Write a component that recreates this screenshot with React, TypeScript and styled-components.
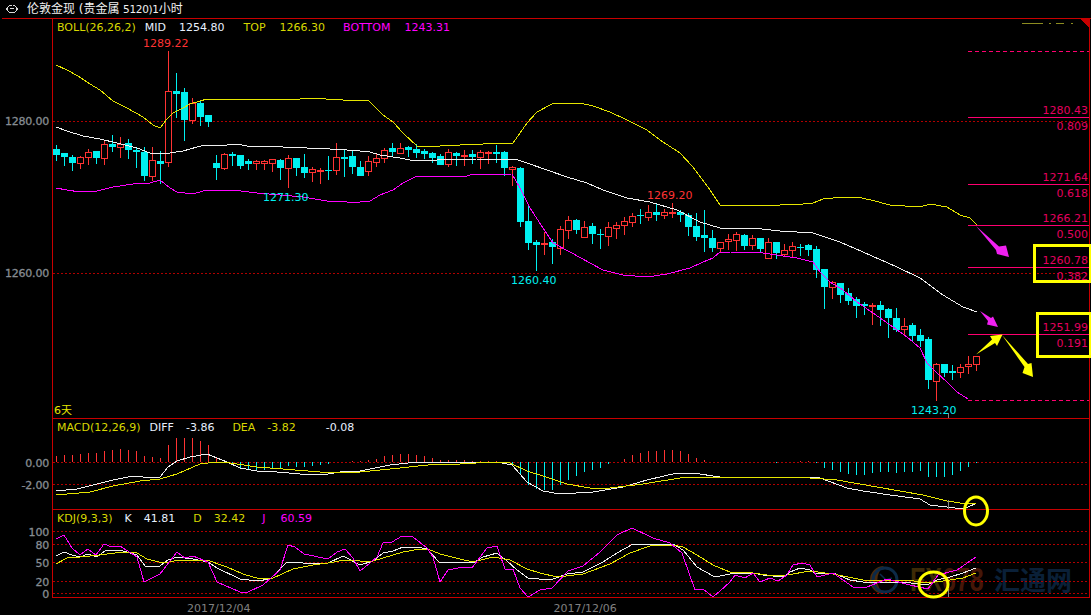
import styled, { createGlobalStyle } from 'styled-components';

const RED = '#ff3333';
const CYAN = '#00f0f0';
const YELLOW = '#e6e600';
const MAGENTA = '#ff00ff';
const FIB = '#ff0070';
const FIB_TEXT = '#e4005f';
const LINE = '#c80000';
const GRID = '#b00000';

type Candle = [wickTop: number, wickBottom: number, bodyTop: number, bodyBottom: number, up: 0 | 1];

// y pixels of every bar, one row per ten bars
const candles: Candle[] = [
  [145, 161, 149, 155, 0], [153, 166, 153, 157, 0], [155, 171, 157, 163, 0], [156, 169, 157, 163, 1], [149, 165, 152, 157, 1],
  [151, 164, 151, 158, 0], [141, 165, 144, 158, 1], [135, 152, 144, 147, 0], [137, 158, 144, 147, 1], [139, 159, 143, 150, 0],
  [147, 168, 150, 152, 0], [147, 181, 152, 176, 0], [147, 181, 160, 176, 1], [151, 184, 161, 164, 0], [51, 167, 91, 162, 1],
  [73, 118, 91, 94, 0], [88, 141, 92, 120, 0], [98, 124, 103, 120, 1], [100, 126, 103, 117, 0], [115, 127, 115, 122, 0],
  [155, 180, 163, 168, 0], [153, 170, 154, 168, 1], [152, 166, 154, 156, 0], [155, 169, 155, 166, 0], [159, 170, 161, 164, 0],
  [160, 170, 161, 163, 1], [160, 170, 161, 163, 1], [159, 172, 159, 163, 1], [159, 180, 160, 168, 0], [155, 188, 158, 168, 1],
  [158, 176, 158, 168, 0], [154, 178, 167, 173, 0], [167, 182, 169, 172, 1], [168, 184, 170, 171, 1], [156, 180, 170, 171, 0],
  [143, 175, 157, 170, 1], [150, 177, 157, 159, 0], [151, 174, 156, 167, 0], [161, 176, 167, 176, 0], [156, 176, 161, 171, 1],
  [154, 167, 158, 162, 1], [148, 163, 150, 158, 1], [143, 156, 148, 152, 0], [143, 154, 148, 153, 1], [146, 157, 147, 150, 0],
  [144, 158, 149, 153, 0], [149, 159, 151, 154, 0], [152, 163, 153, 158, 0], [154, 165, 156, 165, 0], [149, 167, 152, 164, 1],
  [152, 166, 153, 156, 0], [150, 166, 155, 156, 1], [150, 164, 154, 157, 0], [150, 169, 152, 157, 1], [151, 164, 152, 153, 1],
  [145, 163, 152, 154, 0], [151, 176, 152, 168, 0], [166, 186, 167, 169, 1], [167, 227, 168, 222, 0], [205, 250, 221, 243, 0],
  [240, 271, 242, 245, 0], [232, 255, 243, 244, 1], [239, 264, 242, 247, 0], [226, 255, 229, 248, 1], [216, 239, 220, 230, 1],
  [219, 234, 220, 230, 0], [221, 237, 227, 237, 1], [223, 244, 226, 234, 0], [229, 249, 234, 235, 0], [222, 246, 227, 236, 1],
  [222, 239, 225, 228, 1], [217, 235, 221, 225, 1], [213, 227, 216, 222, 1], [209, 224, 215, 216, 0], [205, 221, 212, 217, 1],
  [204, 221, 212, 215, 0], [209, 219, 212, 215, 1], [203, 218, 212, 213, 1], [210, 222, 212, 215, 0], [213, 236, 215, 227, 0],
  [213, 241, 226, 237, 0], [210, 252, 235, 238, 0], [230, 252, 238, 248, 0], [242, 252, 242, 248, 1], [234, 250, 239, 241, 1],
  [232, 251, 234, 240, 1], [234, 250, 235, 246, 0], [235, 250, 238, 245, 1], [238, 252, 238, 249, 0], [238, 258, 242, 258, 1],
  [242, 259, 242, 253, 0], [244, 257, 250, 254, 1], [242, 258, 246, 250, 1], [244, 256, 247, 248, 0], [244, 256, 245, 250, 0],
  [246, 278, 249, 270, 0], [269, 309, 269, 287, 0], [281, 299, 282, 287, 1], [283, 303, 283, 295, 0], [288, 305, 293, 301, 0],
  [297, 318, 299, 306, 0], [302, 315, 304, 306, 0], [303, 325, 305, 306, 1], [301, 326, 305, 310, 0], [308, 338, 309, 318, 0],
  [308, 332, 318, 330, 0], [318, 335, 326, 329, 1], [323, 341, 325, 336, 0], [329, 347, 335, 341, 0], [337, 389, 339, 380, 0],
  [363, 401, 364, 381, 1], [364, 377, 364, 373, 0], [365, 380, 371, 373, 0], [364, 378, 367, 372, 1], [356, 374, 364, 366, 1],
  [356, 371, 356, 364, 1],
];

// bar heights in pixels, above the zero line is red and below is cyan
const macdBars = [
  6.3, 7.3, 6.7, 7.7, 9.3, 9.3, 11.3, 12.3, 13, 12.3,
  11.3, 6.3, 5.3, 4.3, 17.3, 24, 24, 24, 21.3, 17.3,
  5, 0.5, -3, -6, -7, -8.3, -7.7, -6, -6.7, -4.3,
  -5, -4.7, -4.3, -3.3, -2, 0.5, 0.5, 1.3, 0.7, 2.3,
  3.3, 6.3, 7.3, 8.3, 8.3, 7.3, 6.3, 4.3, 2.3, 2.3,
  2.3, 2.3, 1.3, 1.3, 1.3, 1.3, 0, -1.7, -12.7, -22.7,
  -27.3, -28.3, -28.3, -23.3, -17.7, -13.7, -9.7, -7.7, -5.7, -1.7,
  0, 3, 7.3, 9.3, 11.3, 11.3, 12.3, 12.3, 11.3, 8.3,
  4.3, 2.3, 0, 0, 0, 0, 0, 0.5, 0, 0.5,
  -0.5, 0, 0.5, 1, 1, -0.7, -5.7, -7.7, -9.7, -11.7,
  -12.7, -12.7, -10.7, -9.7, -9.7, -10.7, -9.7, -9.7, -8.7, -14.7,
  -14.7, -14.7, -12.7, -8.7, -4.7, -0.7,
];

const bollTop =
  '56,65 67,70 78,76 90,84 100,90 113,101 127,108 143,117 153,125 160,128 167,119 173,113 183,108 190,104 200,101 207,99 300,99 308,98 343,100 368,100 383,115 393,122 403,133 417,146 440,146 460,145 483,144 513,143 527,123 537,112 552,104 557,103 580,103 593,106 610,112 627,120 647,130 660,140 680,153 693,167 710,190 720,205 748,205 753,206 757,205 780,205 787,204 803,204 813,203 823,199 843,197 857,197 871,200 890,205 920,207 930,204 947,207 960,215 970,218 977,225';
const bollMid =
  '56,127 67,131 83,136 100,139 117,143 137,148 150,153 163,154 183,151 197,147 205,145 227,145 237,144 247,146 283,147 330,149 347,150 360,151 370,152 380,155 400,158 415,161 437,160 477,159 515,159 527,163 547,170 567,177 587,183 603,190 627,198 650,202 677,210 700,222 720,228 730,229 753,228 780,231 813,233 840,242 863,252 897,267 920,278 943,295 963,307 977,312';
const bollBottom =
  '56,188 67,190 80,192 97,191 113,187 133,184 150,183 160,180 170,188 177,192 193,194 203,191 233,190 257,193 303,197 327,201 347,202 360,202 370,201 380,195 393,190 403,183 415,177 420,176 467,176 470,175 512,174 520,188 530,208 543,228 553,243 570,252 590,263 603,270 623,275 647,277 667,274 690,268 703,262 713,258 720,252 730,252 763,253 797,258 813,262 820,272 830,282 843,290 857,302 873,313 893,327 907,337 920,348 927,363 937,373 947,382 957,392 968,399';

const macdDiff =
  '56,491 77,489 93,485 113,480 133,476 143,477 160,477 168,467 177,461 190,457 207,454 217,458 227,462 240,468 257,471 277,472 300,474 328,474 340,472 360,471 390,465 417,462 435,462 460,462 497,462 512,465 527,482 543,491 560,494 593,492 623,487 647,480 677,473 693,473 720,477 797,477 810,477 820,478 847,488 863,491 890,495 920,499 930,505 963,509 975,504';
const macdDea =
  '56,495 90,492 113,486 140,481 160,479 177,474 200,464 217,462 230,463 257,467 283,469 320,472 360,472 400,468 437,464 460,464 493,462 510,463 527,471 543,476 567,484 590,488 610,488 643,484 680,478 700,477 797,477 837,480 877,487 923,495 947,501 960,503 976,504';

const kdjK =
  '56,556 64,552 72,555 80,557 88,554 97,557 105,551 120,550 137,555 145,566 160,566 168,560 177,557 193,559 208,562 217,568 240,579 257,581 270,579 287,562 297,562 303,563 328,563 343,556 360,565 373,561 383,553 393,551 403,547 417,547 427,549 440,563 453,562 473,563 483,557 497,553 507,561 517,570 528,578 550,580 567,574 583,572 603,562 617,553 633,544 673,544 683,550 697,567 713,576 720,576 730,574 740,573 753,573 763,575 783,577 790,572 800,568 810,570 817,574 833,573 850,580 863,582 883,582 903,582 927,585 937,580 950,577 963,573 976,568';
const kdjD =
  '56,564 67,558 80,557 100,555 122,552 137,553 147,559 163,563 180,560 207,560 227,567 243,574 260,579 273,578 293,569 313,565 328,563 345,560 353,560 360,561 373,561 383,558 403,552 420,549 428,549 440,554 460,559 473,562 493,557 510,560 527,569 540,573 557,577 583,574 610,564 630,553 650,546 673,545 683,547 697,555 713,565 720,568 730,572 753,573 767,575 787,575 810,571 833,574 863,580 907,580 927,583 943,581 963,578 976,573';
const kdjJ =
  '56,539 64,535 72,548 80,555 88,549 96,555 104,544 112,547 120,546 137,557 144,582 160,574 177,552 185,558 193,556 208,562 217,582 240,592 248,592 263,585 280,570 288,545 295,547 304,554 328,559 337,552 345,549 353,558 360,571 370,563 377,557 383,543 392,542 402,536 413,537 427,548 433,557 440,582 448,570 463,567 472,568 487,548 497,546 505,569 513,569 520,588 528,597 540,590 552,588 568,571 583,566 600,552 617,535 632,528 653,538 670,543 682,553 695,590 703,589 713,597 720,591 730,582 735,575 745,578 753,573 760,582 770,578 778,581 787,575 793,565 802,563 810,565 817,577 833,573 853,587 867,587 887,579 910,585 928,589 938,575 957,570 976,557';

const arrows = [
  { fill: '#f020f0', points: '976,226 999,246.5 1006,245.5 1009,257 997,254 996,250' },
  { fill: '#f020f0', points: '980,311 991,318 993,316.5 998,327 987,324.5 988,321' },
  { fill: '#ffff00', points: '976,354.5 992,339.5 990,336 1002.5,334.5 997,346 995,343' },
  { fill: '#ffff00', points: '1002,335 1028,364 1031.5,363 1033,377 1022.5,373 1024.5,367' },
];

const fibLevels = [
  { y: 117.5, price: '1280.43', ratio: '0.809' },
  { y: 184.5, price: '1271.64', ratio: '0.618' },
  { y: 225.5, price: '1266.21', ratio: '0.500' },
  { y: 267.5, price: '1260.78', ratio: '0.382' },
  { y: 334.5, price: '1251.99', ratio: '0.191' },
];

const priceMarks = [
  { x: 143, y: 47, text: '1289.22', color: RED },
  { x: 263, y: 201, text: '1271.30', color: CYAN },
  { x: 647, y: 199, text: '1269.20', color: RED },
  { x: 511, y: 284, text: '1260.40', color: CYAN },
  { x: 911, y: 414, text: '1243.20', color: CYAN },
];

const GlobalStyle = createGlobalStyle`
  html, body {
    margin: 0;
    background: #000;
  }
  body {
    font-family: "DejaVu Sans", "Noto Sans CJK SC", sans-serif;
    font-size: 11px;
    line-height: 1;
  }
`;

const Screen = styled.div`
  width: 1091px;
  height: 615px;
  overflow: hidden;
  background: #000;
`;

const TitleBar = styled.div`
  height: 18px;
  margin-left: 2px;
  padding-left: 4px;
  display: flex;
  align-items: center;
  border-bottom: 1px solid ${LINE};
  color: #f0f0f0;
  font-size: 12px;
`;

const TitleName = styled.span`
  margin-left: 9px;
`;

const TitleCode = styled.span`
  margin-left: 3.5px;
  font-size: 10.5px;
  letter-spacing: -0.3px;
`;

const TitleIcon = () => (
  <svg width="12" height="8" viewBox="0 0 12 8" fill="none" stroke="#d8d8d8" shapeRendering="crispEdges">
    <path d="M6 0.5 H3.5 L0.5 4 L3.5 7.5 H8.5 L11.5 4 L8.5 0.5 H7 M3.5 3.5 H8" />
  </svg>
);

const Row = styled.div`
  display: flex;
`;

const Axis = styled.div`
  position: relative;
  width: 52px;
  flex: none;
  border-right: 1px solid ${LINE};
`;

const AxisLabel = styled.span<{ $y: number }>`
  position: absolute;
  right: 3px;
  top: ${(p) => p.$y}px;
  color: #868c92;
  -webkit-text-stroke: 0.3px #868c92;
  transform: translateY(-50%);
  letter-spacing: -0.2px;
`;

const Plot = styled.div<{ $height: number }>`
  position: relative;
  width: 1036px;
  height: ${(p) => p.$height}px;
  border-bottom: 1px solid ${LINE};
  border-right: 1px solid ${LINE};
`;

const Drawing = styled.svg`
  position: absolute;
  left: 0;
  top: 0;
  overflow: visible;
  shape-rendering: crispEdges;
`;

const Legend = styled.div`
  position: relative;
  display: flex;
  padding: 3px 0 0 4px;
  white-space: nowrap;
`;

const LegendItem = styled.span<{ $color: string; $gap?: number }>`
  color: ${(p) => p.$color};
  margin-left: ${(p) => p.$gap ?? 0}px;
`;

const Trace = styled.polyline<{ $color: string }>`
  fill: none;
  stroke: ${(p) => p.$color};
  stroke-width: 1;
`;

const GridLine = styled.line`
  stroke: ${GRID};
  stroke-width: 1;
  stroke-dasharray: 2 2;
`;

const ChartText = styled.text<{ $color: string }>`
  fill: ${(p) => p.$color};
  font-size: 11px;
`;

const CursorTick = styled.line`
  stroke: #8a8a8a;
  stroke-width: 1;
`;

const Mark = styled.ellipse`
  fill: none;
  stroke: #ffff00;
  stroke-width: 3;
  shape-rendering: auto;
`;

const Frame = styled.rect`
  fill: none;
  stroke: #ffff00;
  stroke-width: 3;
`;

const WatermarkLatin = styled.text`
  font-family: "Liberation Sans", sans-serif;
  font-size: 25px;
  font-weight: 700;
`;

const WatermarkCjk = styled.text`
  fill: #0a2038;
  font-size: 26px;
  font-weight: 700;
`;

const DateRow = styled.div`
  display: flex;
  padding: 5px 0 0 187px;
  color: #808080;
`;

const DateLabel = styled.span<{ $gap?: number }>`
  margin-left: ${(p) => p.$gap ?? 0}px;
`;

const barX = (i: number) => 56.5 + i * 8;

const Candles = () => (
  <g>
    {candles.map(([wickTop, wickBottom, bodyTop, bodyBottom, up], i) => {
      const x = barX(i);
      const color = up ? RED : CYAN;
      return (
        <g key={i}>
          <line x1={x} x2={x} y1={wickTop} y2={wickBottom} stroke={color} />
          {up ? (
            <rect x={x - 3} y={bodyTop + 0.5} width={6} height={Math.max(bodyBottom - bodyTop, 1)} fill="#000" stroke={color} />
          ) : (
            <rect x={x - 3.5} y={bodyTop} width={7} height={Math.max(bodyBottom - bodyTop, 1)} fill={color} />
          )}
        </g>
      );
    })}
  </g>
);

const PriceChart = () => (
  <Drawing width={1036} height={399} viewBox="53 19 1036 399">
    <GridLine x1={53} x2={1089} y1={121.5} y2={121.5} />
    <GridLine x1={53} x2={1089} y1={273.5} y2={273.5} />
    <Candles />
    <Trace $color={YELLOW} points={bollTop} />
    <Trace $color="#f0f0f0" points={bollMid} />
    <Trace $color={MAGENTA} points={bollBottom} />
    <line x1={968} x2={1089} y1={51.5} y2={51.5} stroke={FIB} strokeDasharray="4 3" />
    <line x1={968} x2={1089} y1={400.5} y2={400.5} stroke={FIB} strokeDasharray="4 3" />
    {fibLevels.map((level) => (
      <g key={level.price}>
        <line x1={968} x2={1089} y1={level.y} y2={level.y} stroke={FIB} />
        <ChartText $color={FIB_TEXT} x={1088} y={level.y - 3.5} textAnchor="end">
          {level.price}
        </ChartText>
        <ChartText $color={FIB_TEXT} x={1088} y={level.y + 12.5} textAnchor="end">
          {level.ratio}
        </ChartText>
      </g>
    ))}
    {priceMarks.map((mark) => (
      <ChartText key={mark.text} $color={mark.color} x={mark.x} y={mark.y}>
        {mark.text}
      </ChartText>
    ))}
    <ChartText $color={YELLOW} x={54} y={414}>
      6天
    </ChartText>
    <CursorTick x1={948.5} x2={948.5} y1={413} y2={418} />
    <path d="M1080 19 H1089 V28 Z" fill={LINE} />
    <path d="M1022 23.5 H1043 M1049 23.5 H1051 M1056 23.5 H1064 M1071 23.5 H1073" stroke="#8c8c20" />
    {arrows.map((arrow) => (
      <polygon key={arrow.points} points={arrow.points} fill={arrow.fill} shapeRendering="auto" />
    ))}
    <Frame x={1034.5} y={245.5} width={56} height={36} />
    <Frame x={1037.5} y={313.5} width={53} height={43} />
  </Drawing>
);

const MacdChart = () => (
  <Drawing width={1036} height={90} viewBox="53 419 1036 90">
    <GridLine x1={53} x2={1089} y1={462.5} y2={462.5} />
    <GridLine x1={53} x2={1089} y1={484.5} y2={484.5} />
    {macdBars.map((value, i) =>
      value === 0 ? null : (
        <line
          key={i}
          x1={barX(i)}
          x2={barX(i)}
          y1={462}
          y2={462 - value}
          stroke={value > 0 ? RED : CYAN}
        />
      ),
    )}
    <Trace $color="#f0f0f0" points={macdDiff} />
    <Trace $color={YELLOW} points={macdDea} />
    <CursorTick x1={948.5} x2={948.5} y1={500} y2={509} />
    <Mark cx={976} cy={511} rx={11.5} ry={14} />
  </Drawing>
);

const Watermark = () => (
  <g shapeRendering="auto">
    <path d="M884 566 a14 14 0 1 0 0 28 a18 18 0 0 1 0 -28 Z" fill="#4a2a0a" />
    <circle cx={885} cy={580} r={12} fill="none" stroke="#0c2a48" strokeWidth={3} />
    <path d="M880 574 L886 580 L892 578" fill="none" stroke="#0c2a48" strokeWidth={1.5} />
    <WatermarkLatin transform="translate(910 591) scale(1 1.35)">
      <tspan fill="#3d2a06">FX</tspan>
      <tspan fill="#451708">678</tspan>
    </WatermarkLatin>
    <WatermarkCjk x={994} y={590}>
      汇通网
    </WatermarkCjk>
  </g>
);

const KdjChart = () => (
  <Drawing width={1036} height={87} viewBox="53 510 1036 87">
    <Watermark />
    {[531.5, 544.5, 562.5, 581.5, 593.5].map((y) => (
      <GridLine key={y} x1={53} x2={1089} y1={y} y2={y} />
    ))}
    <Trace $color="#f0f0f0" points={kdjK} />
    <Trace $color={YELLOW} points={kdjD} />
    <Trace $color={MAGENTA} points={kdjJ} />
    <CursorTick x1={948.5} x2={948.5} y1={589} y2={597} />
    <Mark cx={933.5} cy={584.5} rx={14.5} ry={12.5} />
  </Drawing>
);

export default function App() {
  return (
    <Screen>
      <GlobalStyle />
      <TitleBar>
        <TitleIcon />
        <TitleName>伦敦金现 (贵金属</TitleName>
        <TitleCode>5120)1</TitleCode>
        <span>小时</span>
      </TitleBar>

      <Row>
        <Axis>
          <AxisLabel $y={102}>1280.00</AxisLabel>
          <AxisLabel $y={254}>1260.00</AxisLabel>
        </Axis>
        <Plot $height={399}>
          <PriceChart />
          <Legend>
            <LegendItem $color="#d8d800">BOLL(26,26,2)</LegendItem>
            <LegendItem $color="#e8f0ff" $gap={9}>MID</LegendItem>
            <LegendItem $color="#e8f0ff" $gap={13}>1254.80</LegendItem>
            <LegendItem $color="#d8d800" $gap={19}>TOP</LegendItem>
            <LegendItem $color="#d8d800" $gap={14}>1266.30</LegendItem>
            <LegendItem $color={MAGENTA} $gap={18}>BOTTOM</LegendItem>
            <LegendItem $color={MAGENTA} $gap={14}>1243.31</LegendItem>
          </Legend>
        </Plot>
      </Row>

      <Row>
        <Axis>
          <AxisLabel $y={43.5}>0.00</AxisLabel>
          <AxisLabel $y={65.5}>-2.00</AxisLabel>
        </Axis>
        <Plot $height={90}>
          <MacdChart />
          <Legend>
            <LegendItem $color="#d8d800">MACD(12,26,9)</LegendItem>
            <LegendItem $color="#e8f0ff" $gap={9}>DIFF</LegendItem>
            <LegendItem $color="#e8f0ff" $gap={12}>-3.86</LegendItem>
            <LegendItem $color="#d8d800" $gap={18}>DEA</LegendItem>
            <LegendItem $color="#d8d800" $gap={12}>-3.82</LegendItem>
            <LegendItem $color="#e8f0ff" $gap={30}>-0.08</LegendItem>
          </Legend>
        </Plot>
      </Row>

      <Row>
        <Axis>
          <AxisLabel $y={21.5}>100</AxisLabel>
          <AxisLabel $y={34.5}>80</AxisLabel>
          <AxisLabel $y={52.5}>50</AxisLabel>
          <AxisLabel $y={71.5}>20</AxisLabel>
          <AxisLabel $y={83.5}>0</AxisLabel>
        </Axis>
        <Plot $height={87}>
          <KdjChart />
          <Legend>
            <LegendItem $color="#d8d800">KDJ(9,3,3)</LegendItem>
            <LegendItem $color="#e8f0ff" $gap={12}>K</LegendItem>
            <LegendItem $color="#e8f0ff" $gap={12}>41.81</LegendItem>
            <LegendItem $color="#d8d800" $gap={18}>D</LegendItem>
            <LegendItem $color="#d8d800" $gap={12}>32.42</LegendItem>
            <LegendItem $color={MAGENTA} $gap={17}>J</LegendItem>
            <LegendItem $color={MAGENTA} $gap={15}>60.59</LegendItem>
          </Legend>
        </Plot>
      </Row>

      <DateRow>
        <DateLabel>2017/12/04</DateLabel>
        <DateLabel $gap={303}>2017/12/06</DateLabel>
      </DateRow>
    </Screen>
  );
}
